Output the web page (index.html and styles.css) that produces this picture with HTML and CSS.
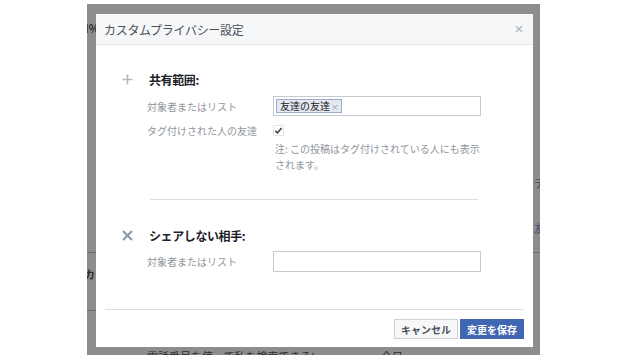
FILE: index.html
```html
<!DOCTYPE html>
<html>
<head>
    <title>カスタムプライバシー設定</title>
    <link rel="stylesheet" href="styles.css">
</head>
<body>

    <div class="stage">
        <div class="frame">
            <!-- page underneath the dialog -->
            <div class="under under-l1"></div>
            <div class="under under-l2"></div>
            <div class="under under-r1"></div>
            <span class="under-text ut-left1">I%</span>
            <span class="under-text ut-left2">カ</span>
            <span class="under-text ut-right1">テ</span>
            <span class="under-text ut-right2">友</span>
            <span class="under-text ut-bottom1">電話番号を使って私を検索できる!</span>
            <span class="under-text ut-bottom2">今日</span>

            <div class="dialog">
                <div class="dialog-header">
                    <span class="dialog-title">カスタムプライバシー設定</span>
                    <svg class="close" width="8" height="8" viewBox="0 0 8 8">
                        <path d="M1 1L7 7M7 1L1 7" stroke="#b1b5bc" stroke-width="1.4" fill="none"/>
                    </svg>
                </div>

                <div class="dialog-body">
                    <div class="section-head">
                        <span class="section-icon">
                            <svg width="11" height="11" viewBox="0 0 11 11">
                                <path d="M5.5 0.5V10.5M0.5 5.5H10.5" stroke="#b3b8c1" stroke-width="1.6" fill="none"/>
                            </svg>
                        </span>
                        <span class="section-title">共有範囲:</span>
                    </div>

                    <div class="field field-first">
                        <span class="field-label">対象者またはリスト</span>
                        <div class="token-input">
                            <span class="token">友達の友達<span class="token-x">×</span></span>
                        </div>
                    </div>

                    <div class="field field-check">
                        <span class="field-label">タグ付けされた人の友達</span>
                        <svg class="check" width="11" height="11" viewBox="0 0 11 11">
                            <rect x="0.5" y="0.5" width="10" height="10" fill="#fff" stroke="#e3e5e8"/>
                            <path d="M2.3 5.8L4.4 7.8L8.6 3" stroke="#3a3f47" stroke-width="1.5" fill="none"/>
                        </svg>
                    </div>

                    <p class="note">注: この投稿はタグ付けされている人にも表示<br>されます。</p>

                    <div class="divider"></div>

                    <div class="section-head section-second">
                        <span class="section-icon">
                            <svg width="11" height="11" viewBox="0 0 11 11">
                                <path d="M1 1L10 10M10 1L1 10" stroke="#8e99a8" stroke-width="2.2" fill="none"/>
                            </svg>
                        </span>
                        <span class="section-title">シェアしない相手:</span>
                    </div>

                    <div class="field field-last">
                        <span class="field-label">対象者またはリスト</span>
                        <div class="token-input empty"></div>
                    </div>
                </div>

                <div class="dialog-footer">
                    <button class="btn btn-cancel">キャンセル</button>
                    <button class="btn btn-save">変更を保存</button>
                </div>
            </div>
        </div>
    </div>

</body>
</html>
```

FILE: styles.css
```css
body {
    margin: 0;
    background-color: #fff;
    font-family: "Noto Sans CJK JP", "Noto Sans", sans-serif;
}

.stage {
    padding: 4px 0 0 87px;
}

.frame {
    position: relative;
    width: 453px;
    height: 351px;
    box-sizing: border-box;
    padding: 10px 7px 8px 9px;
    background-color: #8d8d8d;
    overflow: hidden;
}

/* bits of the page behind the overlay */
.under {
    position: absolute;
    height: 1px;
    background-color: #6f6f6f;
}

.under-l1 { left: 0; top: 248px; width: 9px; }
.under-l2 { left: 0; top: 306px; width: 9px; }
.under-r1 { right: 0; top: 248px; width: 7px; }

.under-text {
    position: absolute;
    font-size: 11px;
    line-height: 12px;
    color: #2e2e2e;
}

.ut-left1 { left: -2px; top: 18px; font-weight: bold; }
.ut-left2 { left: -3px; top: 264px; font-weight: bold; }
.ut-right1 { left: 447px; top: 173px; color: #3b4a6b; }
.ut-right2 { left: 447px; top: 218px; color: #3b4a6b; }
.ut-bottom1 { left: 60px; top: 346px; }
.ut-bottom2 { left: 294px; top: 346px; }

.dialog {
    position: relative;
    height: 333px;
    display: flex;
    flex-direction: column;
    background-color: #fff;
}

.dialog-header {
    height: 31px;
    box-sizing: border-box;
    display: flex;
    align-items: center;
    justify-content: space-between;
    padding: 0 10px 0 8px;
    background-color: #f6f7f9;
    border-bottom: 1px solid #e5e5e5;
}

.dialog-title {
    font-size: 12px;
    color: #4b4f56;
    letter-spacing: -0.3px;
}

.dialog-body {
    flex: 1;
    padding: 26px 0 0 22px;
}

.section-head {
    display: flex;
    align-items: center;
    height: 16px;
}

.section-second {
    margin-top: 27px;
}

.section-icon {
    width: 18px;
    margin-right: 13px;
    display: flex;
    justify-content: center;
}

.section-title {
    font-size: 12px;
    font-weight: bold;
    color: #1d2129;
    letter-spacing: -0.4px;
}

.field {
    display: grid;
    grid-template-columns: 126px 208px;
    align-items: center;
    margin-left: 29px;
}

.field-first {
    margin-top: 9px;
}

.field-check {
    margin-top: 7px;
    height: 14px;
}

.field-last {
    margin-top: 8px;
}

.field-label {
    font-size: 10px;
    color: #90949c;
}

.token-input {
    height: 20px;
    box-sizing: border-box;
    border: 1px solid #c6cbd3;
    padding: 0 2px;
    display: flex;
    align-items: center;
}

.token-input.empty {
    height: 21px;
}

.token {
    height: 14px;
    box-sizing: border-box;
    padding: 0 2px 0 3px;
    background-color: #e4e8f1;
    border: 1px solid #9dabc9;
    font-size: 10px;
    line-height: 12px;
    color: #1d2129;
}

.token-x {
    font-size: 8px;
    color: #8d949e;
    margin-left: 1px;
}

.check {
    display: block;
}

.note {
    margin: 4px 0 0 157px;
    font-size: 10px;
    line-height: 16px;
    color: #90949c;
    white-space: nowrap;
}

.divider {
    margin: 26px 0 0 32px;
    width: 328px;
    height: 1px;
    background-color: #dddfe2;
}

.dialog-footer {
    margin: 0 9px;
    padding: 9px 0 8px;
    border-top: 1px solid #dddfe2;
    display: flex;
    justify-content: flex-end;
    gap: 2px;
}

.btn {
    width: 64px;
    height: 20px;
    box-sizing: border-box;
    padding: 0;
    font-family: inherit;
    font-size: 10px;
    font-weight: bold;
    border: 1px solid;
}

.btn-cancel {
    background-color: #f6f7f9;
    border-color: #ced0d4;
    color: #4b4f56;
}

.btn-save {
    background-color: #4267b2;
    border-color: #4267b2;
    color: #fff;
}
```
